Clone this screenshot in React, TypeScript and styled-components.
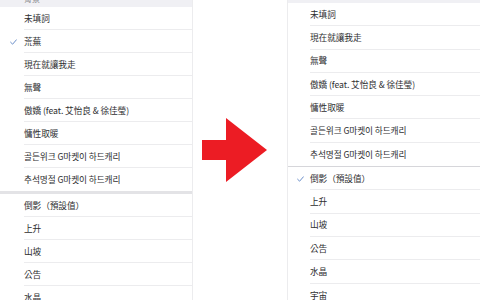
import styled, { createGlobalStyle } from "styled-components";

const GlobalStyle = createGlobalStyle`
  html, body {
    margin: 0;
    padding: 0;
    background: #ffffff;
  }
  body {
    font-family: "Noto Sans CJK TC", "Noto Sans CJK KR", "Noto Sans", sans-serif;
  }
`;

type Item = { label: string; checked?: boolean };

const firstSection: string[] = [
  "未填詞",
  "荒蕪",
  "現在就讓我走",
  "無聲",
  "傲嬌 (feat. 艾怡良 & 徐佳瑩)",
  "慵性取暖",
  "골든위크 G마켓이 하드캐리",
  "추석명절 G마켓이 하드캐리",
];

const secondSection: string[] = ["倒影（預設值）", "上升", "山坡", "公告", "水晶", "宇宙"];

const Page = styled.div`
  display: flex;
  width: 480px;
  height: 300px;
  overflow: hidden;
`;

const Panel = styled.div<{ $side: "left" | "right" }>`
  width: 193px;
  height: 300px;
  overflow: hidden;
  background: #ffffff;
  border-${(p) => (p.$side === "left" ? "right" : "left")}: 1px solid #ececee;
  box-sizing: border-box;
  flex-shrink: 0;
`;

const Header = styled.div<{ $h: number }>`
  height: ${(p) => p.$h}px;
  background: #f0f0f4;
  overflow: hidden;
  font-size: 8px;
  color: #8a8a8f;
  padding-left: 24px;
  line-height: 8px;
  span {
    display: block;
    margin-top: -5px;
  }
`;

const Row = styled.div<{ $h: number; $check: number }>`
  display: grid;
  grid-template-columns: ${(p) => p.$check}px 1fr;
  height: ${(p) => p.$h}px;
`;

const Check = styled.div`
  display: flex;
  align-items: center;
  justify-content: center;
  padding-left: 2px;
  svg {
    width: 7px;
    height: 6px;
  }
`;

const Label = styled.div<{ $line: boolean }>`
  display: flex;
  align-items: center;
  font-size: 8.7px;
  color: #2e2e30;
  white-space: nowrap;
  letter-spacing: -0.1px;
  border-bottom: ${(p) => (p.$line ? "1px solid #ececee" : "none")};
  box-sizing: border-box;
`;

const Band = styled.div`
  height: 3px;
  background: #e3e3e6;
`;

const Rule = styled.div`
  height: 1px;
  background: #d6d6da;
`;

const ArrowColumn = styled.div`
  flex: 1;
  display: flex;
  align-items: center;
  padding-left: 9px;
  svg {
    width: 65px;
    height: 64px;
  }
`;

const CheckMark = () => (
  <svg viewBox="0 0 7 6">
    <path d="M0.6 3.2 L2.6 5.2 L6.4 0.8" fill="none" stroke="#6b8fc9" strokeWidth="1" strokeLinecap="round" strokeLinejoin="round" />
  </svg>
);

const ItemRow = ({ item, h, check, line }: { item: Item; h: number; check: number; line: boolean }) => (
  <Row $h={h} $check={check}>
    <Check>{item.checked && <CheckMark />}</Check>
    <Label $line={line}>{item.label}</Label>
  </Row>
);

const Section = ({ items, h, check }: { items: Item[]; h: number; check: number }) => (
  <>
    {items.map((item, i) => (
      <ItemRow key={item.label} item={item} h={h} check={check} line={i < items.length - 1} />
    ))}
  </>
);

export default function App() {
  const leftTop: Item[] = firstSection.map((label) => ({ label, checked: label === "荒蕪" }));
  const leftBottom: Item[] = secondSection.map((label) => ({ label }));
  const rightTop: Item[] = firstSection.filter((l) => l !== "荒蕪").map((label) => ({ label }));
  const rightBottom: Item[] = secondSection.map((label, i) => ({ label, checked: i === 0 }));

  return (
    <>
      <GlobalStyle />
      <Page>
        <Panel $side="left">
          <Header $h={7}>
            <span>背景</span>
          </Header>
          <Section items={leftTop} h={23} check={24} />
          <Band />
          <Section items={leftBottom} h={23} check={24} />
        </Panel>
        <ArrowColumn>
          <svg viewBox="0 0 65 64">
            <path d="M0 22 H24 V0 L65 32 L24 64 V42 H0 Z" fill="#ec1c24" />
          </svg>
        </ArrowColumn>
        <Panel $side="right">
          <Header $h={3} />
          <Section items={rightTop} h={23.3} check={22} />
          <Rule />
          <Section items={rightBottom} h={23.3} check={22} />
        </Panel>
      </Page>
    </>
  );
}
